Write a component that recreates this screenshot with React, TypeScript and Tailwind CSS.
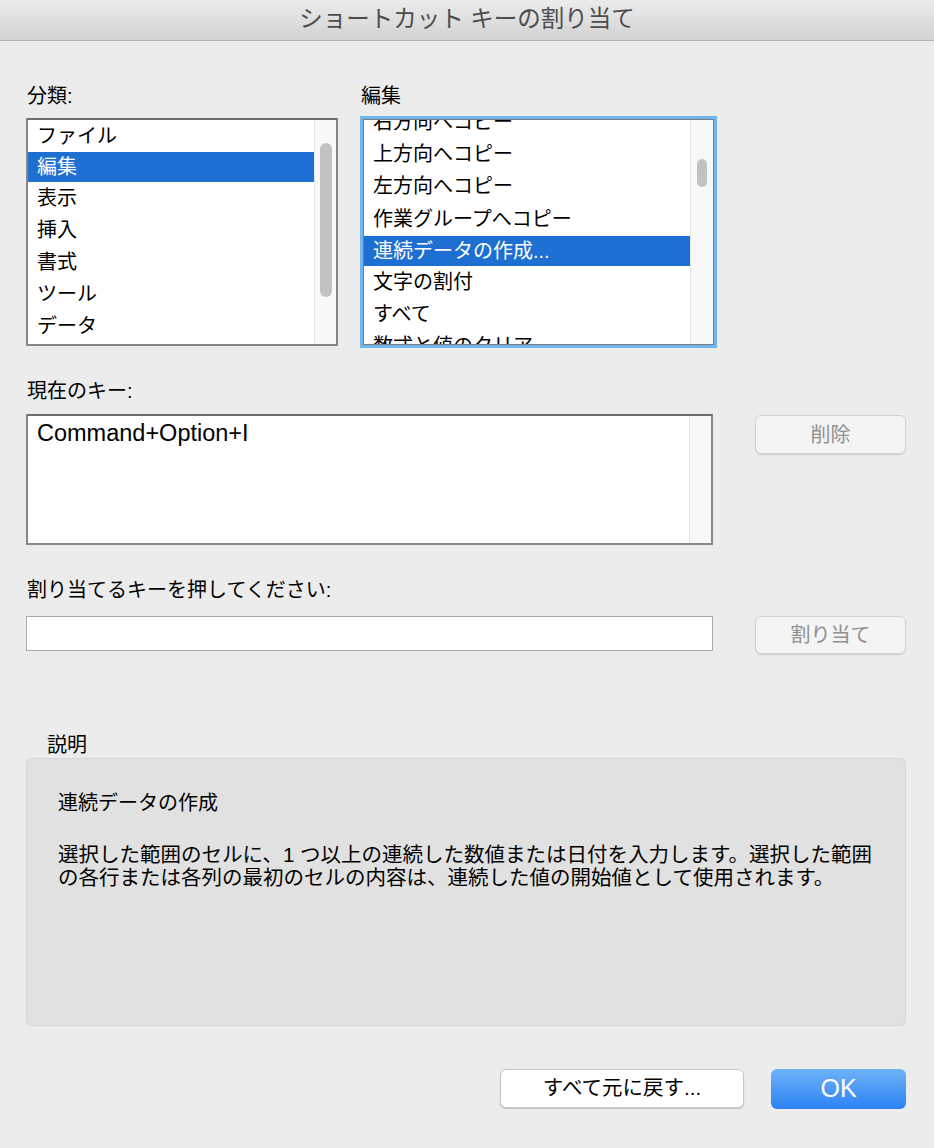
import React from "react";

const FONT = "font-[family-name:'Liberation_Sans','Noto_Sans_CJK_JP',sans-serif]";

function Label({ children, className = "" }: { children: React.ReactNode; className?: string }) {
  return <div className={`h-[24px] text-[20px] leading-[24px] text-black whitespace-nowrap ${className}`}>{children}</div>;
}

function GrayButton({ children, h }: { children: React.ReactNode; h: string }) {
  return (
    <div
      className={`w-[151px] ${h} rounded-[6px] border border-[#d2d2d2] bg-[#f4f4f4] shadow-[0_1px_1px_rgba(0,0,0,0.12)] flex items-center justify-center text-[20px] text-[#8f8f8f]`}
    >
      {children}
    </div>
  );
}

export default function App() {
  const cats = ["ファイル", "編集", "表示", "挿入", "書式", "ツール", "データ"];
  return (
    <div className={`w-[934px] h-[1148px] bg-[#ececec] flex flex-col overflow-hidden ${FONT}`}>
      {/* title bar */}
      <div className="h-[41px] shrink-0 border-b border-[#b3b3b3] bg-linear-to-b from-[#ebebeb] to-[#d3d3d3] flex items-center justify-center text-[23.5px] text-[#4d4d4d]">
        ショートカット キーの割り当て
      </div>

      <div className="flex flex-col pl-[26px] pr-[28px]">
        {/* lists row */}
        <div className="flex mt-[43px]">
          <div className="w-[312px] flex flex-col">
            <Label className="pl-[1px]">分類:</Label>
            <div className="mt-[10px] h-[228px] border-2 border-[#878787] border-t-[#6f6f6f] bg-white flex overflow-hidden">
              <div className="flex-1 flex flex-col">
                {cats.map((c, i) => (
                  <div
                    key={c}
                    className={`${i === 1 ? "h-[30px] bg-[#1e6fd2] text-white" : "h-[32px] text-black"} shrink-0 flex items-center pl-[9px] text-[20px] leading-[24px]`}
                  >
                    {c}
                  </div>
                ))}
              </div>
              <div className="w-[22px] border-l border-[#e3e3e3] bg-[#f8f8f8] flex flex-col">
                <div className="ml-[5px] mt-[23px] w-[12px] h-[154px] rounded-full bg-[#c2c2c2]" />
              </div>
            </div>
          </div>

          <div className="ml-[23px] flex flex-col">
            <Label>編集</Label>
            <div className="mt-[11px] ml-[2px] w-[351px] h-[226px] border border-[#7b7b7b] bg-white shadow-[0_0_0_3px_#6fb5f2] flex overflow-hidden">
              <div className="flex-1 flex flex-col -mt-[14px]">
                <div className="h-[32px] shrink-0 flex items-center pl-[9px] text-[20px] text-black">右方向へコピー</div>
                <div className="h-[32px] shrink-0 flex items-center pl-[9px] text-[20px] text-black">上方向へコピー</div>
                <div className="h-[32px] shrink-0 flex items-center pl-[9px] text-[20px] text-black">左方向へコピー</div>
                <div className="h-[34px] shrink-0 flex items-center pl-[9px] text-[20px] text-black">作業グループへコピー</div>
                <div className="h-[30px] shrink-0 flex items-center pl-[9px] text-[20px] bg-[#1e6fd2] text-white">連続データの作成...</div>
                <div className="h-[32px] shrink-0 flex items-center pl-[9px] text-[20px] text-black">文字の割付</div>
                <div className="h-[32px] shrink-0 flex items-center pl-[9px] text-[20px] text-black">すべて</div>
                <div className="h-[32px] shrink-0 flex items-center pl-[9px] text-[20px] text-black">数式と値のクリア</div>
              </div>
              <div className="w-[23px] border-l border-[#e3e3e3] bg-[#f8f8f8] flex flex-col">
                <div className="ml-[6px] mt-[39px] w-[10px] h-[28px] rounded-full bg-[#c2c2c2]" />
              </div>
            </div>
          </div>
        </div>

        {/* current key */}
        <Label className="mt-[33px] pl-[1px]">現在のキー:</Label>
        <div className="mt-[11px] flex items-start">
          <div className="w-[687px] h-[131px] border-2 border-[#878787] border-t-[#6f6f6f] bg-white flex">
            <div className="flex-1 pl-[9px] pt-[3px] text-[23.5px] leading-[28px] text-black">Command+Option+I</div>
            <div className="w-[22px] border-l border-[#e3e3e3] bg-[#f8f8f8]" />
          </div>
          <div className="ml-[42px] mt-[1px]">
            <GrayButton h="h-[39px]">削除</GrayButton>
          </div>
        </div>

        {/* assign */}
        <Label className="mt-[33px] pl-[1px]">割り当てるキーを押してください:</Label>
        <div className="mt-[14px] flex items-start">
          <div className="w-[687px] h-[35px] border border-[#ababab] bg-white" />
          <div className="ml-[42px]">
            <GrayButton h="h-[38px]">割り当て</GrayButton>
          </div>
        </div>

        {/* description */}
        <Label className="mt-[79px] ml-[21px]">説明</Label>
        <div className="mt-[1px] w-[880px] h-[268px] rounded-[6px] border border-[#d6d6d6] bg-[#e1e1e1] pl-[31px] pr-[10px] pt-[32px] flex flex-col">
          <div className="text-[20px] leading-[24px] text-black">連続データの作成</div>
          <div className="mt-[28px] text-[20.5px] leading-[23px] text-black whitespace-nowrap">
            選択した範囲のセルに、1 つ以上の連続した数値または日付を入力します。選択した範囲
            <br />
            の各行または各列の最初のセルの内容は、連続した値の開始値として使用されます。
          </div>
        </div>

        {/* bottom buttons */}
        <div className="mt-[43px] flex justify-end items-start">
          <div className="w-[244px] h-[39px] rounded-[6px] border border-[#c6c6c6] bg-white shadow-[0_1px_1px_rgba(0,0,0,0.18)] flex items-center justify-center text-[20.5px] text-black">
            すべて元に戻す...
          </div>
          <div className="ml-[27px] w-[135px] h-[40px] rounded-[6px] bg-linear-to-b from-[#6db2f7] to-[#2a82f6] flex items-center justify-center text-[25px] text-white">
            OK
          </div>
        </div>
      </div>
    </div>
  );
}
